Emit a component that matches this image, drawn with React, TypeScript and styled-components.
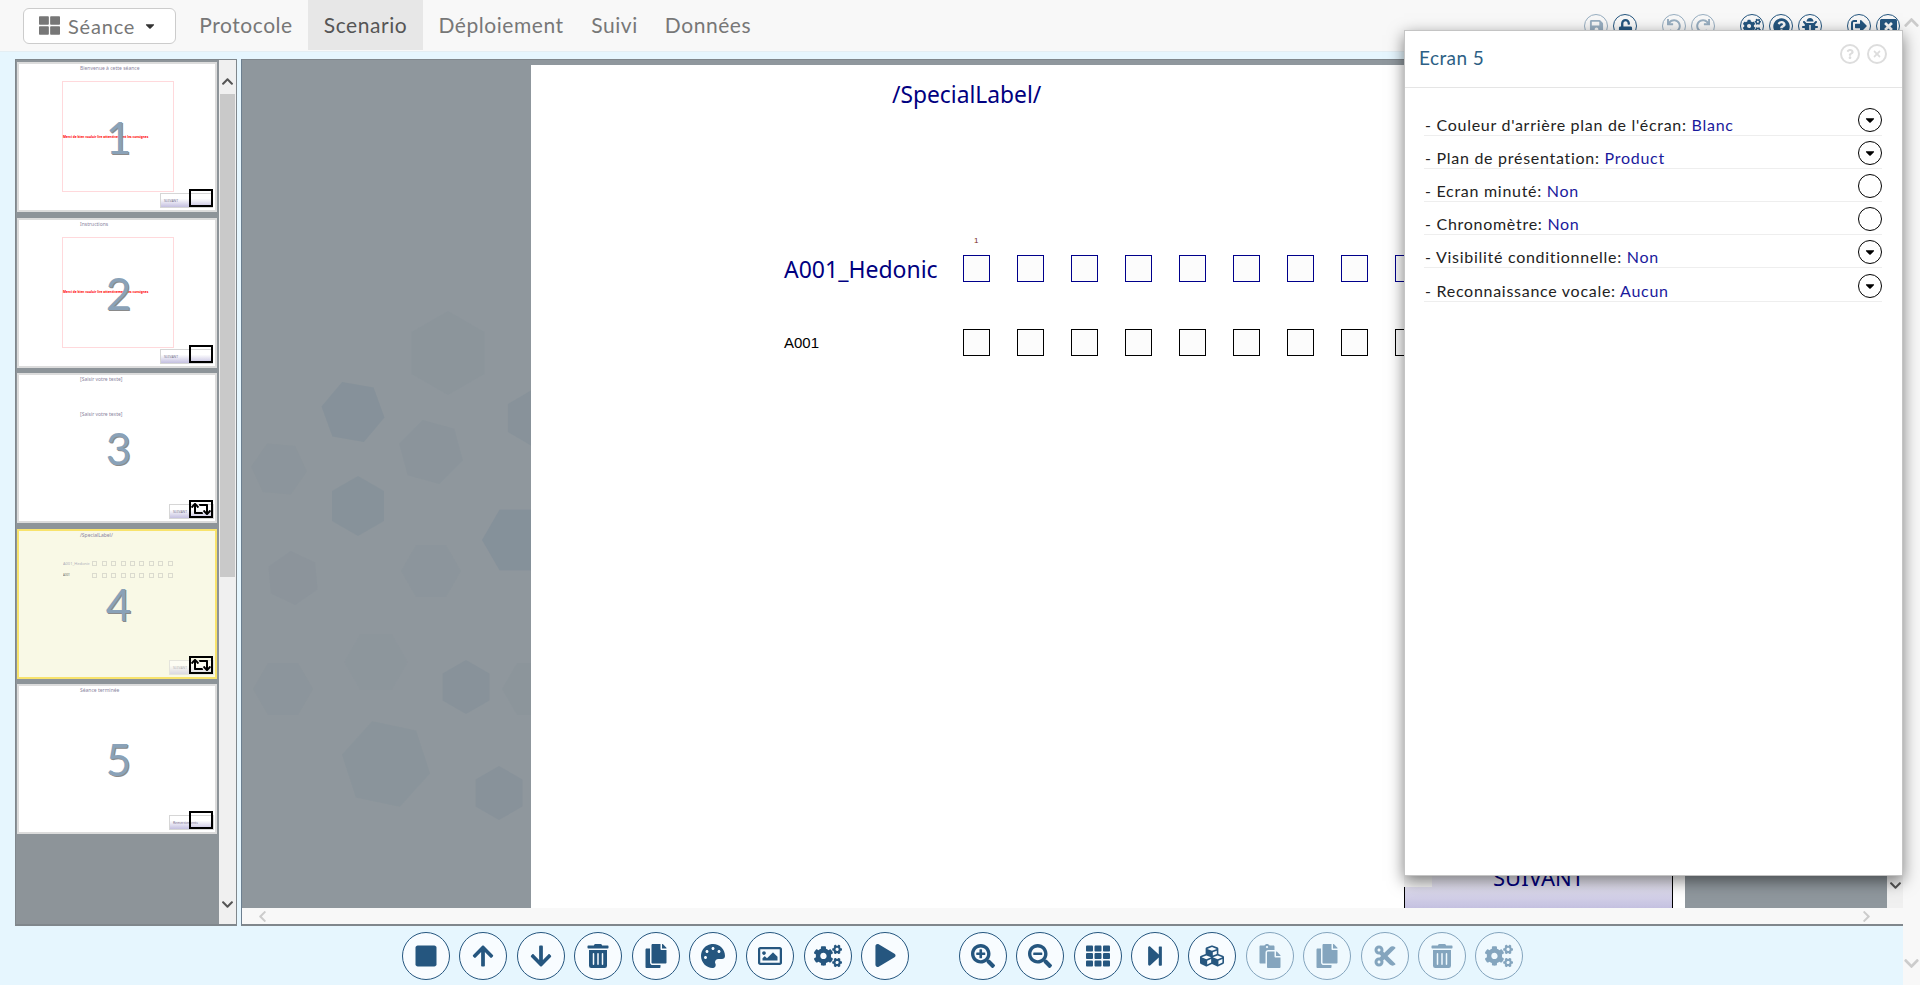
import { ReactNode } from 'react';
import styled, { createGlobalStyle } from 'styled-components';
import {
  FaArrowDown,
  FaArrowUp,
  FaBug,
  FaCaretDown,
  FaChevronDown,
  FaChevronLeft,
  FaChevronRight,
  FaChevronUp,
  FaCogs,
  FaCopy,
  FaCubes,
  FaCut,
  FaPalette,
  FaPaste,
  FaPlay,
  FaQuestion,
  FaQuestionCircle,
  FaRedo,
  FaRegImage,
  FaRetweet,
  FaSave,
  FaSearchMinus,
  FaSearchPlus,
  FaSignOutAlt,
  FaStepForward,
  FaStop,
  FaTh,
  FaThLarge,
  FaTimes,
  FaTrashAlt,
  FaUndo,
  FaUnlock,
  FaWindowClose,
} from 'react-icons/fa';

const UI_FONT = `Lato, 'Open Sans', sans-serif`;
const SHEET_FONT = `'Noto Sans', 'Open Sans', sans-serif`;
const ICON_BLUE = '#25567f';

const GlobalStyle = createGlobalStyle`
  html, body {
    margin: 0;
    padding: 0;
    overflow: hidden;
  }
  body {
    font-family: ${UI_FONT};
    background: #f8f8f8;
  }
`;

type ThumbKind = 'intro' | 'text' | 'grid' | 'end';

type Thumb = {
  id: number;
  kind: ThumbKind;
  title: string;
  badge: boolean;
};

const THUMBS: Thumb[] = [
  { id: 1, kind: 'intro', title: 'Bienvenue à cette séance', badge: false },
  { id: 2, kind: 'intro', title: 'Instructions', badge: false },
  { id: 3, kind: 'text', title: '[Saisir votre texte]', badge: true },
  { id: 4, kind: 'grid', title: '/SpecialLabel/', badge: true },
  { id: 5, kind: 'end', title: 'Séance terminée', badge: false },
];

const TABS = [
  { name: 'Protocole', width: 124 },
  { name: 'Scenario', width: 115 },
  { name: 'Déploiement', width: 156 },
  { name: 'Suivi', width: 71 },
  { name: 'Données', width: 116 },
];

const SETTINGS = [
  { label: "Couleur d'arrière plan de l'écran:", value: 'Blanc', menu: true },
  { label: 'Plan de présentation:', value: 'Product', menu: true },
  { label: 'Ecran minuté:', value: 'Non', menu: false },
  { label: 'Chronomètre:', value: 'Non', menu: false },
  { label: 'Visibilité conditionnelle:', value: 'Non', menu: true },
  { label: 'Reconnaissance vocale:', value: 'Aucun', menu: true },
];

// [cx, cy, r, rotation, opacity]
const HEXAGONS = [
  [111, 347, 32, 10, 0.42],
  [116, 441, 30, 30, 0.36],
  [189, 387, 33, 15, 0.18],
  [206, 288, 42, 30, 0.11],
  [37, 404, 28, 5, 0.1],
  [51, 513, 27, 25, 0.16],
  [189, 506, 30, 0, 0.1],
  [275, 475, 35, 0, 0.45],
  [290, 353, 28, 30, 0.32],
  [134, 597, 32, 0, 0.08],
  [41, 624, 30, 0, 0.1],
  [224, 622, 27, 30, 0.34],
  [144, 699, 45, 12, 0.2],
  [257, 728, 27, 30, 0.34],
  [290, 624, 30, 0, 0.12],
];

const hexPoints = (cx: number, cy: number, r: number, rot: number) =>
  Array.from({ length: 6 }, (_, i) => {
    const a = ((60 * i + rot) * Math.PI) / 180;
    return `${(cx + r * Math.cos(a)).toFixed(1)},${(cy + r * Math.sin(a)).toFixed(1)}`;
  }).join(' ');

const Hexagons = () => (
  <HexSvg viewBox="0 0 290 843" preserveAspectRatio="xMinYMin slice">
    {HEXAGONS.map(([cx, cy, r, rot, opacity], i) => (
      <polygon
        key={i}
        points={hexPoints(cx, cy, r, rot)}
        fill="#7a8a96"
        fillOpacity={opacity}
      />
    ))}
  </HexSvg>
);

const ThumbCard = ({ thumb }: { thumb: Thumb }) => {
  const selected = thumb.kind === 'grid';
  return (
    <Card $selected={selected}>
      <MiniTitle>{thumb.title}</MiniTitle>
      {thumb.kind === 'intro' && (
        <PinkBox>
          <MiniRed>Merci de bien vouloir lire attentivement les consignes</MiniRed>
        </PinkBox>
      )}
      {thumb.kind === 'text' && <MiniSecond>{thumb.title}</MiniSecond>}
      {selected && (
        <MiniGrid>
          {['A001_Hedonic', 'A001'].map((label, row) => (
            <MiniRow key={label}>
              <MiniLabel $dark={row === 1}>{label}</MiniLabel>
              {Array.from({ length: 9 }, (_, i) => (
                <MiniSquare key={i} />
              ))}
            </MiniRow>
          ))}
        </MiniGrid>
      )}
      <MiniButton $wide={thumb.kind === 'intro'} $faded={selected}>
        {thumb.kind === 'end' ? 'Remerciements' : 'SUIVANT'}
      </MiniButton>
      <BigNumber>{thumb.id}</BigNumber>
      <Badge>{thumb.badge && <FaRetweet size={20} />}</Badge>
    </Card>
  );
};

const RoundIcon = ({
  children,
  disabled,
}: {
  children: ReactNode;
  disabled?: boolean;
}) => <ToolButton $disabled={disabled}>{children}</ToolButton>;

const App = () => (
  <Page>
    <GlobalStyle />
    <Content>
      <Navbar>
        <SessionButton>
          <FaThLarge size={21} color="#777" />
          <span>Séance</span>
          <FaCaretDown size={14} color="#333" />
        </SessionButton>
        <Tabs>
          {TABS.map(({ name, width }) => (
            <Tab key={name} $width={width} $active={name === 'Scenario'}>
              {name}
            </Tab>
          ))}
        </Tabs>
        <TopIcons>
          <TopGroup>
            <TopButton $disabled><FaSave size={15} /></TopButton>
            <TopButton><FaUnlock size={15} /></TopButton>
          </TopGroup>
          <TopGroup>
            <TopButton $disabled><FaUndo size={14} /></TopButton>
            <TopButton $disabled><FaRedo size={14} /></TopButton>
          </TopGroup>
          <TopGroup>
            <TopButton><FaCogs size={18} /></TopButton>
            <TopButton><FaQuestionCircle size={17} /></TopButton>
            <TopButton><FaBug size={16} /></TopButton>
          </TopGroup>
          <TopGroup>
            <TopButton><FaSignOutAlt size={16} /></TopButton>
            <TopButton><FaWindowClose size={17} /></TopButton>
          </TopGroup>
        </TopIcons>
      </Navbar>

      <Workspace>
        <ThumbPanel>
          <ThumbList>
            {THUMBS.map((thumb) => (
              <ThumbCard key={thumb.id} thumb={thumb} />
            ))}
          </ThumbList>
          <ScrollTrack>
            <ScrollArrow>
              <FaChevronUp size={13} />
            </ScrollArrow>
            <ScrollThumb />
            <ScrollArrow>
              <FaChevronDown size={13} />
            </ScrollArrow>
          </ScrollTrack>
        </ThumbPanel>

        <MainPanel>
          <CanvasRow>
            <Canvas>
              <DecoratedColumn>
                <Hexagons />
              </DecoratedColumn>
              <Sheet>
                <SheetTitle>/SpecialLabel/</SheetTitle>
                <ScaleHead>1</ScaleHead>
                <ScaleRow>
                  <HedonicLabel>A001_Hedonic</HedonicLabel>
                  {Array.from({ length: 9 }, (_, i) => (
                    <Square key={i} $color="#00008b" />
                  ))}
                </ScaleRow>
                <ScaleRow>
                  <ProductLabel>A001</ProductLabel>
                  {Array.from({ length: 9 }, (_, i) => (
                    <Square key={i} $color="#000" />
                  ))}
                </ScaleRow>
                <NextButton>SUIVANT</NextButton>
              </Sheet>
              <PlainColumn />
            </Canvas>
            <VerticalBar>
              <FaChevronDown size={13} />
            </VerticalBar>
          </CanvasRow>
          <HorizontalBar>
            <FaChevronLeft size={13} />
            <FaChevronRight size={13} />
          </HorizontalBar>
        </MainPanel>
      </Workspace>

      <Toolbar>
        <RoundIcon><FaStop size={24} /></RoundIcon>
        <RoundIcon><FaArrowUp size={24} /></RoundIcon>
        <RoundIcon><FaArrowDown size={24} /></RoundIcon>
        <RoundIcon><FaTrashAlt size={24} /></RoundIcon>
        <RoundIcon><FaCopy size={24} /></RoundIcon>
        <RoundIcon><FaPalette size={24} /></RoundIcon>
        <RoundIcon><FaRegImage size={24} /></RoundIcon>
        <RoundIcon><FaCogs size={28} /></RoundIcon>
        <RoundIcon><FaPlay size={23} /></RoundIcon>
        <ToolSpacer />
        <RoundIcon><FaSearchPlus size={24} /></RoundIcon>
        <RoundIcon><FaSearchMinus size={24} /></RoundIcon>
        <RoundIcon><FaTh size={24} /></RoundIcon>
        <RoundIcon><FaStepForward size={22} /></RoundIcon>
        <RoundIcon><FaCubes size={24} /></RoundIcon>
        <RoundIcon disabled><FaPaste size={24} /></RoundIcon>
        <RoundIcon disabled><FaCopy size={24} /></RoundIcon>
        <RoundIcon disabled><FaCut size={24} /></RoundIcon>
        <RoundIcon disabled><FaTrashAlt size={24} /></RoundIcon>
        <RoundIcon disabled><FaCogs size={28} /></RoundIcon>
      </Toolbar>
    </Content>

    <PageScroll>
      <FaChevronUp size={17} />
      <FaChevronDown size={17} />
    </PageScroll>

    <Dialog>
      <DialogHeader>
        <DialogTitle>Ecran 5</DialogTitle>
        <DialogActions>
          <DialogAction><FaQuestion size={10} /></DialogAction>
          <DialogAction><FaTimes size={10} /></DialogAction>
        </DialogActions>
      </DialogHeader>
      <DialogBody>
        {SETTINGS.map(({ label, value, menu }) => (
          <SettingRow key={label}>
            <SettingText>
              - {label} <SettingValue>{value}</SettingValue>
            </SettingText>
            <SettingToggle>{menu && <FaCaretDown size={14} />}</SettingToggle>
          </SettingRow>
        ))}
      </DialogBody>
    </Dialog>
  </Page>
);

export default App;

const Page = styled.div`
  position: relative;
  display: flex;
  width: 1920px;
  height: 985px;
  overflow: hidden;
`;

const Content = styled.div`
  flex: 1;
  min-width: 0;
  display: flex;
  flex-direction: column;
  background: #e6f6fe;
`;

const PageScroll = styled.div`
  width: 17px;
  padding: 14px 0 13px;
  box-sizing: border-box;
  display: flex;
  flex-direction: column;
  justify-content: space-between;
  align-items: center;
  background: #f8f8f8;
  color: #ccc;
`;

const Navbar = styled.nav`
  height: 52px;
  flex: none;
  box-sizing: border-box;
  display: flex;
  padding-left: 23px;
  background: #f8f8f8;
  border-bottom: 1px solid #e4eef3;
`;

const SessionButton = styled.div`
  width: 153px;
  height: 36px;
  margin-top: 8px;
  box-sizing: border-box;
  display: flex;
  align-items: center;
  padding: 0 15px 1px;
  gap: 8px;
  background: #fff;
  border: 1px solid #ccc;
  border-radius: 6px;
  color: #777;
  font-size: 20px;
  letter-spacing: 0.8px;
`;

const Tabs = styled.div`
  display: flex;
  height: 50px;
  margin-left: 8px;
`;

const Tab = styled.div<{ $active?: boolean; $width: number }>`
  width: ${({ $width }) => $width}px;
  text-align: center;
  line-height: 50px;
  font-size: 21px;
  letter-spacing: 0.55px;
  color: ${({ $active }) => ($active ? '#555' : '#777')};
  background: ${({ $active }) => ($active ? '#e7e7e7' : 'transparent')};
`;

const TopIcons = styled.div`
  margin-left: auto;
  display: flex;
  gap: 25px;
  padding: 14px 3px 0 0;
`;

const TopGroup = styled.div`
  display: flex;
  gap: 5px;
`;

const TopButton = styled.div<{ $disabled?: boolean }>`
  width: 24px;
  height: 24px;
  box-sizing: border-box;
  display: flex;
  align-items: center;
  justify-content: center;
  border: 1px solid ${ICON_BLUE};
  border-radius: 50%;
  color: ${ICON_BLUE};
  opacity: ${({ $disabled }) => ($disabled ? 0.45 : 1)};
`;

const Workspace = styled.div`
  height: 867px;
  flex: none;
  margin-top: 7px;
  padding-left: 15px;
  display: flex;
  gap: 4px;
`;

const ThumbPanel = styled.aside`
  width: 222px;
  flex: none;
  box-sizing: border-box;
  display: flex;
  background: #8d9499;
  border: 1px solid #80878c;
  border-bottom-width: 2px;
`;

const ThumbList = styled.div`
  width: 203px;
  box-sizing: border-box;
  display: flex;
  flex-direction: column;
  gap: 5.5px;
  padding: 2px 2px 0 1px;
`;

const Card = styled.div<{ $selected?: boolean }>`
  position: relative;
  height: 150px;
  flex: none;
  box-sizing: border-box;
  display: flex;
  flex-direction: column;
  overflow: hidden;
  background: ${({ $selected }) => ($selected ? '#f9f9e6' : '#fff')};
  border: 2px solid ${({ $selected }) => ($selected ? '#f8e36c' : '#dcdcdc')};
`;

const MiniTitle = styled.div`
  margin: 1px 0 0 61px;
  height: 7px;
  line-height: 7px;
  font-size: 5px;
  font-family: ${SHEET_FONT};
  color: #8a85a0;
  white-space: nowrap;
`;

const PinkBox = styled.div`
  width: 112px;
  height: 111px;
  margin: 9px 0 0 43px;
  box-sizing: border-box;
  display: flex;
  align-items: center;
  border: 1px solid #ffd9dc;
`;

const MiniRed = styled.div`
  width: 86px;
  flex: none;
  font-family: ${SHEET_FONT};
  font-size: 3.2px;
  font-weight: 700;
  line-height: 4px;
  color: #f00;
  white-space: nowrap;
`;

const MiniSecond = styled(MiniTitle)`
  margin-top: 28px;
`;

const MiniGrid = styled.div`
  margin: 22px 0 0 44px;
  display: flex;
  flex-direction: column;
  gap: 7px;
  opacity: 0.6;
`;

const MiniRow = styled.div`
  display: flex;
  align-items: center;
  gap: 4.4px;
`;

const MiniLabel = styled.div<{ $dark?: boolean }>`
  width: 25px;
  font-family: ${SHEET_FONT};
  font-size: ${({ $dark }) => ($dark ? 3 : 4)}px;
  line-height: 5px;
  color: ${({ $dark }) => ($dark ? '#000' : '#7a7a9c')};
  white-space: nowrap;
`;

const MiniSquare = styled.div`
  width: 5px;
  height: 5px;
  box-sizing: border-box;
  border: 1px solid #c8c8c0;
`;

const MiniButton = styled.div<{ $wide?: boolean; $faded?: boolean }>`
  width: ${({ $wide }) => ($wide ? 53 : 45)}px;
  height: 15px;
  margin: auto ${({ $wide }) => ($wide ? 2 : 1)}px 2px auto;
  box-sizing: border-box;
  padding-left: 3px;
  font-family: ${SHEET_FONT};
  font-size: 3.4px;
  line-height: 13px;
  color: #77718c;
  white-space: nowrap;
  background: linear-gradient(#fff 35%, #c4c0e0);
  border: 1px solid #d6d6d6;
  opacity: ${({ $faded }) => ($faded ? 0.55 : 1)};
`;

const BigNumber = styled.div`
  position: absolute;
  inset: 0;
  padding-left: 3px;
  display: flex;
  align-items: center;
  justify-content: center;
  font-size: 44px;
  color: #8aa2b8;
  text-shadow: 1px 1px 0 #8a8a8a;
`;

const Badge = styled.div`
  position: absolute;
  right: 2px;
  bottom: 3px;
  width: 24px;
  height: 18px;
  box-sizing: border-box;
  display: flex;
  align-items: center;
  justify-content: center;
  color: #000;
  border: 2px solid #000;
`;

const ScrollTrack = styled.div`
  flex: 1;
  box-sizing: border-box;
  display: flex;
  flex-direction: column;
  padding: 0 1px;
  background: #f0f0f0;
`;

const ScrollArrow = styled.div`
  height: 34px;
  flex: none;
  box-sizing: border-box;
  padding-top: 8px;
  display: flex;
  align-items: center;
  justify-content: center;
  color: #555;
  &:last-child {
    margin-top: auto;
    padding-top: 0;
    padding-bottom: 6px;
  }
`;

const ScrollThumb = styled.div`
  height: 483px;
  flex: none;
  background: #c9c9c9;
`;

const MainPanel = styled.main`
  flex: 1;
  min-width: 0;
  display: flex;
  flex-direction: column;
  border-left: 1px solid #6c7f90;
  border-top: 1px solid #80878c;
  border-bottom: 2px solid #80878c;
`;

const CanvasRow = styled.div`
  flex: 1;
  min-height: 0;
  display: flex;
`;

const Canvas = styled.div`
  flex: 1;
  min-width: 0;
  display: flex;
  padding-top: 5px;
  background: #8f979d;
`;

const DecoratedColumn = styled.div`
  width: 289px;
  flex: none;
`;

const HexSvg = styled.svg`
  display: block;
  width: 100%;
  height: 100%;
`;

const PlainColumn = styled.div`
  flex: 1;
`;

const Sheet = styled.div`
  width: 1154px;
  flex: none;
  box-sizing: border-box;
  display: flex;
  flex-direction: column;
  padding-left: 253px;
  background: #fff;
  font-family: ${SHEET_FONT};
`;

const SheetTitle = styled.div`
  margin: 12px 0 0 108px;
  font-size: 22.8px;
  line-height: 36px;
  color: #000080;
`;

const ScaleHead = styled.div`
  margin: 123px 0 4px 190px;
  font-family: 'Liberation Sans', sans-serif;
  font-size: 8px;
  line-height: 10px;
  color: #7a2a20;
`;

const ScaleRow = styled.div`
  display: flex;
  align-items: center;
  gap: 27px;
  height: 27px;
  margin-top: 5px;
  margin-bottom: 42px;
`;

const HedonicLabel = styled.div`
  width: 152px;
  flex: none;
  font-size: 23px;
  color: #000080;
  white-space: nowrap;
`;

const ProductLabel = styled(HedonicLabel)`
  font-family: 'Liberation Sans', sans-serif;
  font-size: 15px;
  color: #000;
`;

const Square = styled.div<{ $color: string }>`
  width: 27px;
  height: 27px;
  flex: none;
  box-sizing: border-box;
  background: #fcfcfc;
  border: 1px solid ${({ $color }) => $color};
`;

const NextButton = styled.div`
  position: relative;
  width: 269px;
  height: 72px;
  margin: auto 0 0 620px;
  flex: none;
  box-sizing: border-box;
  padding-top: 24px;
  text-align: center;
  font-size: 22px;
  line-height: 32px;
  color: #000080;
  background: linear-gradient(#fff 40%, #c4c0e0);
  border: 1px solid #000;
  border-bottom: 0;
  &::before {
    content: '';
    position: absolute;
    left: -1px;
    top: 38px;
    width: 28px;
    height: 12px;
    background: #f4f4f4;
  }
`;

const VerticalBar = styled.div`
  width: 16px;
  flex: none;
  box-sizing: border-box;
  padding: 0 0 16px;
  display: flex;
  align-items: flex-end;
  justify-content: center;
  background: #f0f0f0;
  color: #555;
`;

const HorizontalBar = styled.div`
  height: 16px;
  flex: none;
  display: flex;
  align-items: center;
  justify-content: space-between;
  padding: 0 30px 0 14px;
  background: #f8f8f8;
  color: #ccc;
`;

const Toolbar = styled.div`
  flex: 1;
  display: flex;
  align-items: center;
  gap: 9.4px;
  padding-left: 402px;
`;

const ToolSpacer = styled.div`
  width: 31px;
`;

const ToolButton = styled.div<{ $disabled?: boolean }>`
  width: 48px;
  height: 48px;
  flex: none;
  box-sizing: border-box;
  display: flex;
  align-items: center;
  justify-content: center;
  background: #f8fcff;
  border: 1px solid ${ICON_BLUE};
  border-radius: 50%;
  color: ${ICON_BLUE};
  opacity: ${({ $disabled }) => ($disabled ? 0.5 : 1)};
`;

const Dialog = styled.section`
  position: absolute;
  left: 1404px;
  top: 30px;
  width: 499px;
  height: 846px;
  box-sizing: border-box;
  background: #fff;
  border: 1px solid #c4c4c4;
  box-shadow: 0 5px 15px rgba(0, 0, 0, 0.5);
`;

const DialogHeader = styled.header`
  height: 57px;
  box-sizing: border-box;
  display: flex;
  justify-content: space-between;
  padding: 12px 15px 0 14px;
  border-bottom: 1px solid #e5e5e5;
`;

const DialogTitle = styled.div`
  font-size: 19px;
  line-height: 30px;
  letter-spacing: 0.4px;
  color: #2d5f85;
`;

const DialogActions = styled.div`
  display: flex;
  gap: 7px;
  padding-top: 1px;
`;

const DialogAction = styled.div`
  width: 20px;
  height: 20px;
  box-sizing: border-box;
  display: flex;
  align-items: center;
  justify-content: center;
  border: 2px solid #ddd;
  border-radius: 50%;
  color: #ddd;
`;

const DialogBody = styled.div`
  padding: 15px 20px 0 19px;
`;

const SettingRow = styled.div`
  height: 33.1px;
  box-sizing: border-box;
  display: flex;
  align-items: flex-end;
  justify-content: space-between;
  padding-left: 1px;
  border-bottom: 1px solid #eee;
`;

const SettingText = styled.div`
  font-size: 16px;
  line-height: 20px;
  letter-spacing: 0.72px;
  color: #222;
`;

const SettingValue = styled.span`
  color: #1a1a9c;
`;

const SettingToggle = styled.div`
  width: 24px;
  height: 24px;
  margin-bottom: 3px;
  box-sizing: border-box;
  display: flex;
  align-items: center;
  justify-content: center;
  color: #000;
  border: 1.5px solid #000;
  border-radius: 50%;
`;
